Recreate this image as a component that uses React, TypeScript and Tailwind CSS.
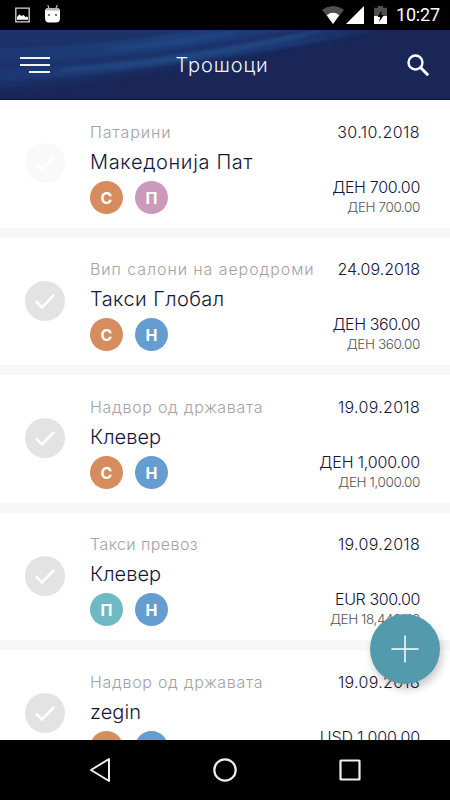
import clsx from "clsx";

interface Tag {
	label: string;
	color: string;
}

interface Expense {
	id: number;
	category: string;
	categoryClass: string;
	title: string;
	titleClass: string;
	date: string;
	dateClass: string;
	amount: string;
	amountClass: string;
	converted: string;
	tags: Tag[];
	disabled?: boolean;
}

const orange: Tag = { label: "С", color: "bg-[#d68c5c]" };
const pink: Tag = { label: "П", color: "bg-[#cb99b9]" };
const blue: Tag = { label: "Н", color: "bg-[#659dd0]" };
const teal: Tag = { label: "П", color: "bg-[#6fbac2]" };

const expenses: Expense[] = [
	{
		id: 1,
		category: "Патарини",
		categoryClass: "tracking-[0.9px]",
		title: "Македонија Пат",
		titleClass: "tracking-[0.65px]",
		date: "30.10.2018",
		dateClass: "tracking-[0.45px]",
		amount: "ДЕН 700.00",
		amountClass: "tracking-[-0.3px]",
		converted: "ДЕН 700.00",
		tags: [orange, pink],
		disabled: true,
	},
	{
		id: 2,
		category: "Вип салони на аеродроми",
		categoryClass: "tracking-[0.92px]",
		title: "Такси Глобал",
		titleClass: "tracking-[0.42px]",
		date: "24.09.2018",
		dateClass: "tracking-[0px]",
		amount: "ДЕН 360.00",
		amountClass: "tracking-[-0.4px]",
		converted: "ДЕН 360.00",
		tags: [orange, blue],
	},
	{
		id: 3,
		category: "Надвор од државата",
		categoryClass: "tracking-[0.7px]",
		title: "Клевер",
		titleClass: "tracking-[0.05px]",
		date: "19.09.2018",
		dateClass: "tracking-[0.3px]",
		amount: "ДЕН 1,000.00",
		amountClass: "tracking-[-0.15px]",
		converted: "ДЕН 1,000.00",
		tags: [orange, blue],
	},
	{
		id: 4,
		category: "Такси превоз",
		categoryClass: "tracking-[0.42px]",
		title: "Клевер",
		titleClass: "tracking-[0.05px]",
		date: "19.09.2018",
		dateClass: "tracking-[0.3px]",
		amount: "EUR 300.00",
		amountClass: "tracking-[-0.4px]",
		converted: "ДЕН 18,449.40",
		tags: [teal, blue],
	},
	{
		id: 5,
		category: "Надвор од државата",
		categoryClass: "tracking-[0.7px]",
		title: "zegin",
		titleClass: "tracking-[0.1px]",
		date: "19.09.2018",
		dateClass: "tracking-[0.3px]",
		amount: "USD 1,000.00",
		amountClass: "tracking-[-0.1px]",
		converted: "ДЕН 53,200.00",
		tags: [orange, blue],
	},
];

const StatusBar: React.FC = () => (
	<div className="flex h-[30px] shrink-0 items-center bg-black pl-[15px] pr-[9px]">
		<svg width="15" height="16" viewBox="0 0 15 16">
			<path d="M.8 1.2h13.4v13.6H.8z" fill="none" stroke="#d8d8d4" strokeWidth="1.3" />
			<path d="M2 12.8V10l2.500-2.500 2 1.400 2-1 2 2 1.500-.4 1 1v2.300z" fill="#fff" />
		</svg>
		<svg className="-mt-[3px] ml-[15px]" width="15" height="18" viewBox="0 0 15 18">
			<path d="M2.800 0l1.400 4M12.200 0l-1.400 4" stroke="#bbb" strokeWidth="1.200" />
			<path d="M0 6q0-3 3.500-3h8Q15 3 15 6v7q0 4.500-4 4.500H4Q0 17.500 0 13z" fill="#fff" />
			<path d="M.5 5.500Q1 3 3.500 3h8q2.500 0 3 2.500z" fill="#b4b4b4" />
			<circle cx="4" cy="10" r="1.100" fill="#555" />
			<circle cx="11" cy="10" r="1.100" fill="#555" />
		</svg>
		<svg className="ml-auto" width="22" height="18" viewBox="0 0 22 18">
			<path d="M0 3.700Q11-3.700 22 3.700L11 18z" fill="#505050" />
			<path d="M4.800 9.200Q11 4.500 17.200 9.200L11 18z" fill="#fff" />
		</svg>
		<svg className="ml-[2px]" width="18" height="18" viewBox="0 0 18 18">
			<path d="M18 0v18H0z" fill="#fff" />
		</svg>
		<svg className="ml-[10px]" width="13" height="18" viewBox="0 0 13 18">
			<path d="M4 0h5v1.800h4V10H0V1.800h4z" fill="#505050" />
			<path d="M0 10h13v8H0z" fill="#fff" />
			<path d="M8 4L3.500 11h2.700L5 16l5-7H7.200z" fill="#000" />
		</svg>
		<span className="ml-[9px] w-[45px] whitespace-nowrap font-['Roboto',sans-serif] text-[18px] font-normal leading-[30px] tracking-[-0.2px] text-white">
			10:27
		</span>
	</div>
);

const Header: React.FC = () => (
	<header className="relative flex h-[70px] shrink-0 items-center justify-between overflow-hidden bg-[#1a2657] px-5">
		<svg className="absolute inset-0" width="450" height="70" viewBox="0 0 450 70">
			<defs>
				<linearGradient id="wave" x1="0" y1="0" x2="1" y2="0">
					<stop offset="0" stopColor="#1b3773" />
					<stop offset=".45" stopColor="#1f437d" />
					<stop offset=".75" stopColor="#1c3a78" />
					<stop offset="1" stopColor="#1a2657" />
				</linearGradient>
				<filter id="soft" x="-5%" y="-30%" width="110%" height="160%">
					<feGaussianBlur stdDeviation="1.500" />
				</filter>
				<filter id="wide" x="-5%" y="-30%" width="110%" height="160%">
					<feGaussianBlur stdDeviation="4" />
				</filter>
			</defs>
			<path d="M-10-10H400C330 10 260 22 180 34C110 46 60 54-10 58z" fill="#1b3069" filter="url(#wide)" />
			<path
				d="M-10 18C80 17 140 10 215-3H395C330 10 265 22 180 33C110 43 60 48-10 51z"
				fill="url(#wave)"
				filter="url(#soft)"
				opacity=".85"
			/>
			<path
				d="M-10 33C90 32 200 18 290-1C305-3 320-2 312 1C210 26 100 36-10 38z"
				fill="#1a2d66"
				opacity=".7"
				filter="url(#soft)"
			/>
			<path d="M60 39C150 31 240 15 330-2C270 19 160 36 60 42z" fill="#254b85" opacity=".7" filter="url(#soft)" />
			<path d="M110 17C150 13 200 7 245-1C220 10 160 18 110 20z" fill="#254b85" opacity=".6" filter="url(#soft)" />
			<path d="M0 69h450v1H0z" fill="#0c1230" />
		</svg>
		<button className="relative flex w-[30px] flex-col items-end gap-[5px]">
			<span className="h-[2px] w-[30px] bg-[#f4f0f6]" />
			<span className="h-[2px] w-[30px] bg-[#f4f0f6]" />
			<span className="h-[2px] w-[21px] bg-[#f4f0f6]" />
		</button>
		<h1 className="relative mr-[13px] font-['Inter',sans-serif] text-[20px] font-light tracking-[0.9px] text-[#f4f2f8]">
			Трошоци
		</h1>
		<svg className="relative" width="23" height="23" viewBox="0 0 23 23" fill="none" stroke="#fff">
			<circle cx="8.500" cy="8.500" r="7" strokeWidth="2.400" />
			<path d="M13.500 13.500l7.700 7.700" strokeWidth="3" />
		</svg>
	</header>
);

const ExpenseCard: React.FC<{ expense: Expense }> = ({ expense }) => (
	<article className="flex h-[127.5px] shrink-0 bg-white pl-[25px] pr-[30px]">
		<div
			className={clsx(
				"mt-[43.4px] flex size-10 shrink-0 items-center justify-center rounded-full bg-[#e3e3e3]",
				expense.disabled && "opacity-20"
			)}
		>
			<svg width="22" height="18" viewBox="0 0 22 18" fill="none" stroke="#fff" strokeWidth="2.600">
				<path d="M2 9.500l6 6L20 3" />
			</svg>
		</div>
		<div className="ml-[25px] flex flex-1 justify-between whitespace-nowrap pt-[21.9px]">
			<div>
				<p className={clsx("text-[16px] leading-5 text-[#a3a3a3]", expense.categoryClass)}>
					{expense.category}
				</p>
				<h2 className={clsx("mt-[5px] text-[20px] leading-[30px]", expense.titleClass)}>{expense.title}</h2>
				<div className="mt-[4px] flex gap-3">
					{expense.tags.map((tag) => (
						<span
							key={tag.label}
							className={clsx(
								"flex size-[33px] items-center justify-center rounded-full pt-px text-[16px] font-bold leading-none text-white",
								tag.color
							)}
						>
							{tag.label}
						</span>
					))}
				</div>
			</div>
			<div className="text-right">
				<p className={clsx("text-[16px] leading-5", expense.dateClass)}>{expense.date}</p>
				<p className={clsx("mt-[34px] text-[16px] leading-[22px]", expense.amountClass)}>{expense.amount}</p>
				<p className="text-[13.5px] leading-[18px] tracking-[-0.4px] text-[#555]">{expense.converted}</p>
			</div>
		</div>
	</article>
);

const NavBar: React.FC = () => (
	<nav className="flex h-[60px] shrink-0 items-center bg-black pl-[89px]">
		<svg width="22" height="26" viewBox="0 0 22 26" fill="none" stroke="#eee" strokeWidth="2">
			<path d="M20 2v22L2 13z" strokeLinejoin="round" />
		</svg>
		<svg className="ml-[102px]" width="24" height="24" viewBox="0 0 24 24" fill="none" stroke="#eee">
			<circle cx="12" cy="12" r="10.700" strokeWidth="2.200" />
		</svg>
		<svg className="ml-[102px]" width="22" height="22" viewBox="0 0 22 22" fill="none" stroke="#eee">
			<rect x="1.500" y="1.500" width="19" height="19" rx=".5" strokeWidth="2.200" />
		</svg>
	</nav>
);

const App: React.FC = () => {
	return (
		<div className="relative flex h-[800px] w-[450px] flex-col overflow-hidden bg-[#f7f7f7]">
			<StatusBar />
			<Header />
			<main className="flex flex-1 flex-col gap-[10px] overflow-hidden font-['Inter',sans-serif] font-light text-[#16163a]">
				{expenses.map((expense) => (
					<ExpenseCard key={expense.id} expense={expense} />
				))}
			</main>
			<NavBar />
			<button className="absolute right-[10px] top-[614px] flex size-[70px] items-center justify-center rounded-full bg-[#529aac] shadow-[2px_5px_9px_rgba(0,0,0,0.22)]">
				<svg width="28" height="28" viewBox="0 0 28 28" stroke="#fff" strokeWidth="1.500">
					<path d="M14 .5v27M.5 14h27" />
				</svg>
			</button>
		</div>
	);
};

export default App;
